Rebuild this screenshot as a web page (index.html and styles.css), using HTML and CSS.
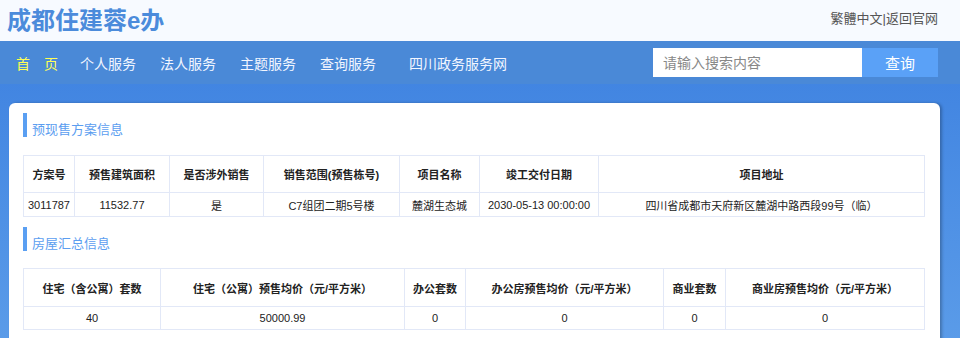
FILE: index.html
```html
<!DOCTYPE html>
<html>
<head>
    <meta charset="utf-8">
    <title>成都住建蓉e办</title>
    <link rel="stylesheet" href="styles.css">
</head>
<body>
    <div class="top">
        <div class="logo">成都住建蓉e办</div>
        <div class="top-links"><a href="#">繁體中文</a>|<a href="#">返回官网</a></div>
    </div>

    <div class="nav">
        <ul class="menu">
            <li class="active">首　页</li>
            <li>个人服务</li>
            <li>法人服务</li>
            <li>主题服务</li>
            <li>查询服务</li>
            <li class="far">四川政务服务网</li>
        </ul>
        <form class="search">
            <input type="text" placeholder="请输入搜索内容">
            <button type="button">查询</button>
        </form>
    </div>

    <div class="main">
        <div class="card">
            <h2 class="sec-title">预现售方案信息</h2>
            <table class="info">
                <tr>
                    <th class="w50">方案号</th>
                    <th class="w94">预售建筑面积</th>
                    <th class="w93">是否涉外销售</th>
                    <th class="w135">销售范围(预售栋号)</th>
                    <th class="w79">项目名称</th>
                    <th class="w118">竣工交付日期</th>
                    <th>项目地址</th>
                </tr>
                <tr>
                    <td>3011787</td>
                    <td>11532.77</td>
                    <td>是</td>
                    <td>C7组团二期5号楼</td>
                    <td>麓湖生态城</td>
                    <td>2030-05-13 00:00:00</td>
                    <td>四川省成都市天府新区麓湖中路西段99号（临）</td>
                </tr>
            </table>

            <h2 class="sec-title">房屋汇总信息</h2>
            <table class="info tall">
                <tr>
                    <th class="w136">住宅（含公寓）套数</th>
                    <th class="w243">住宅（公寓）预售均价（元/平方米）</th>
                    <th class="w60">办公套数</th>
                    <th class="w197">办公房预售均价（元/平方米）</th>
                    <th class="w61">商业套数</th>
                    <th>商业房预售均价（元/平方米）</th>
                </tr>
                <tr>
                    <td>40</td>
                    <td>50000.99</td>
                    <td>0</td>
                    <td>0</td>
                    <td>0</td>
                    <td>0</td>
                </tr>
            </table>
        </div>
    </div>
</body>
</html>
```

FILE: styles.css
```css
body {
    margin: 0;
    padding: 0;
    font-family: "Liberation Sans", "Noto Sans CJK SC", sans-serif;
    background: linear-gradient(#3a7edf, #5c9de9);
    min-height: 338px;
}

.top {
    height: 41px;
    background-color: #f7faff;
    display: flex;
    align-items: center;
    justify-content: space-between;
    padding: 0 22px 0 7px;
}

.logo {
    font-size: 24px;
    font-weight: bold;
    color: #4b8bdb;
    margin-top: -4px;
}

.top-links {
    font-size: 13px;
    color: #555;
    margin-top: -6px;
}

.top-links a {
    color: #555;
    text-decoration: none;
}

.nav {
    height: 43px;
    background-color: #4a89d7;
    display: flex;
    align-items: center;
    justify-content: space-between;
    padding: 0 22px 0 16px;
}

.menu {
    list-style: none;
    margin: 0;
    padding: 0;
    display: flex;
    gap: 24px;
    font-size: 14px;
    color: #f2f6ff;
}

.menu .active {
    color: #ffff55;
    margin-right: -2px;
}

.menu .far {
    margin-left: 9px;
}

.search {
    display: flex;
    margin: 0;
}

.search input {
    width: 209px;
    height: 29px;
    box-sizing: border-box;
    border: none;
    outline: none;
    padding: 0 10px;
    font-size: 14px;
    font-family: "Liberation Sans", "Noto Sans CJK SC", sans-serif;
    background: #fff;
}

.search input::placeholder {
    color: #888;
}

.search button {
    width: 76px;
    height: 29px;
    border: none;
    background-color: #5aa1f7;
    color: #fff;
    font-size: 15px;
    font-family: "Liberation Sans", "Noto Sans CJK SC", sans-serif;
}

.main {
    padding: 19px 20px 0 9px;
}

.card {
    background-color: #fff;
    border-radius: 6px;
    padding: 10px 15px 20px 14px;
    box-shadow: 2px 0 3px rgba(0, 0, 0, 0.25);
}

.sec-title {
    margin: 0;
    font-size: 13px;
    font-weight: normal;
    color: #5c9ef0;
    border-left: 4px solid #5a9ff2;
    padding: 4px 0 0 5px;
    height: 20px;
    line-height: 26px;
}

.info {
    width: 100%;
    border-collapse: collapse;
    table-layout: fixed;
    margin: 18px 0 10px;
    font-size: 11px;
    color: #222;
}

.info th,
.info td {
    border: 1px solid #e2e8f7;
    text-align: center;
    padding: 0;
}

.info th {
    height: 36px;
    font-weight: bold;
}

.info td {
    height: 23px;
}

.info.tall {
    margin-top: 17px;
}

.info.tall th {
    height: 37px;
}

.info.tall td {
    height: 22px;
}

.w50 { width: 50px; }
.w60 { width: 60px; }
.w61 { width: 61px; }
.w79 { width: 79px; }
.w93 { width: 93px; }
.w94 { width: 94px; }
.w118 { width: 118px; }
.w135 { width: 135px; }
.w136 { width: 136px; }
.w197 { width: 197px; }
.w243 { width: 243px; }
```
